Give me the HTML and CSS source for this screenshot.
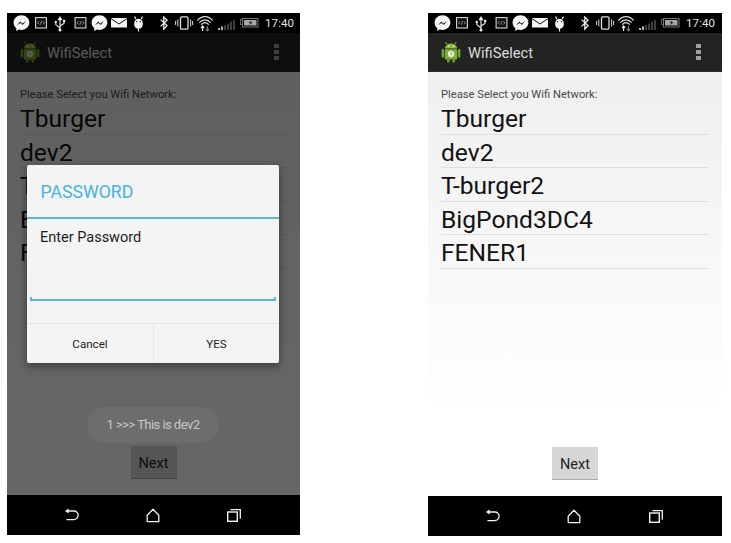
FILE: index.html
```html
<!DOCTYPE html>
<html lang="en">
<head>
<meta charset="utf-8">
<title>WifiSelect</title>
<link rel="stylesheet" href="styles.css">
</head>
<body>
<svg class="defs" width="0" height="0" aria-hidden="true">
  <defs>
    <g id="messenger">
      <path d="M0-7.8C-4.5-7.8-7.9-4.5-7.9-.4-7.9 1.9-6.9 3.9-5.2 5.3V7.9L-2.7 6.5C-1.8 6.8-.9 6.9 0 6.9 4.5 6.9 7.9 3.7 7.9-.4 7.9-4.5 4.5-7.8 0-7.8Z" fill="#f6f6f6"/>
      <path d="M-4.6 2.2-1.2-1.6.8.4 4.6-1.8 1.2 2-.8 0Z" fill="#1c1c1c"/>
    </g>
    <g id="codebox">
      <rect x=".6" y=".6" width="10.8" height="10.4" fill="#111" stroke="#d8d8d8" stroke-width="1.1"/>
      <path d="M4 4.2 2.6 5.8 4 7.4M8 4.2 9.4 5.8 8 7.4M6.6 4 5.4 7.6" fill="none" stroke="#c4c4c4" stroke-width=".7"/>
    </g>
    <symbol id="status" viewBox="0 0 258 20">
      <use href="#messenger" x="14.5" y="10"/>
      <use href="#codebox" x="28" y="4"/>
      <path d="M53 18V5M53 4 51.4 6.6H54.6ZM53 15 48.8 11.6V9.6M53 13 57 10.4V8.6" fill="none" stroke="#eee" stroke-width="1.1"/>
      <circle cx="48.8" cy="9" r="1.2" fill="#eee"/><rect x="56" y="6.8" width="2.2" height="2.2" fill="#eee"/>
      <circle cx="53" cy="17" r="1.5" fill="#eee"/>
      <use href="#codebox" x="67.5" y="4"/>
      <use href="#messenger" x="92.5" y="10"/>
      <rect x="104" y="5" width="16" height="9.5" rx=".5" fill="#f4f4f4"/>
      <path d="M104 5.6 112 11 120 5.6" fill="none" stroke="#111" stroke-width="1"/>
      <path d="M127.2 10A4.3 4.3 0 0 1 135.8 10V11.5A4.3 4.3 0 0 1 127.2 11.5Z" fill="#f4f4f4"/>
      <path d="M128.8 6 127.6 3.6M134.2 6 135.4 3.6M131.5 15V18.6" stroke="#f4f4f4" stroke-width="1.2"/>
      <circle cx="129.6" cy="8.6" r=".7" fill="#111"/><circle cx="133.4" cy="8.6" r=".7" fill="#111"/>
      <path d="M153.6 6.6 160 12.6 156.8 16V4L160 7.2 153.6 13.4" fill="none" stroke="#eee" stroke-width="1.3"/>
      <rect x="173.5" y="3.8" width="7.5" height="12.4" rx="1.2" fill="none" stroke="#ddd" stroke-width="1.3"/>
      <path d="M170.8 6.5V13.5M183.6 6.5V13.5M168.6 8V12M185.6 8V12" stroke="#ccc" stroke-width="1.1"/>
      <path d="M190.4 7.6C194.8 2.4 201.2 2.4 205.6 7.6M192.3 9.6C195.6 5.9 200.4 5.9 203.7 9.6M194.2 11.6C196.5 9.3 199.5 9.3 201.8 11.6" fill="none" stroke="#ddd" stroke-width="1.2"/>
      <path d="M195.6 18V13.6M194 15 195.6 13 197.2 15" fill="none" stroke="#f4f4f4" stroke-width="1.2"/>
      <path d="M200.4 13V17.4M198.8 15.8 200.4 17.8 202 15.8" fill="none" stroke="#777" stroke-width="1.2"/>
      <path d="M212 15V17M215 13.5V17M218 12V17M221 10.5V17M224 8.5V17M227 7V17" stroke-width="1.5" stroke="#555"/>
      <path d="M212 15V17M215 13.5V17" stroke-width="1.5" stroke="#ddd"/>
      <rect x="233.5" y="6.5" width="2" height="5" fill="none" stroke="#777" stroke-width=".8"/>
      <rect x="235.5" y="5.5" width="15.5" height="8.5" fill="none" stroke="#777" stroke-width="1"/>
      <rect x="237" y="7" width="12.5" height="5.5" fill="#a5a5a5"/>
      <path d="M244.6 7.4 241.4 10H243.4L242.2 12 245.6 9.4H243.6Z" fill="#111"/>
    </symbol>
    <symbol id="app" viewBox="0 0 20 22">
      <path d="M5.8 3.2 4.8 1M14.2 3.2 15.2 1" stroke="#86b33c" stroke-width="1"/>
      <path d="M4 7.6C4 4.6 6.6 2.4 10 2.4S16 4.6 16 7.6Z" fill="#8dbb3f"/>
      <rect x="3.8" y="8.2" width="12.4" height="10.4" rx="1.4" fill="#7fae36"/>
      <rect x=".6" y="8" width="2.5" height="8.4" rx="1.2" fill="#75a32f"/>
      <rect x="16.9" y="8" width="2.5" height="8.4" rx="1.2" fill="#75a32f"/>
      <rect x="6" y="17" width="2.6" height="4.6" rx="1.2" fill="#6d9a2c"/>
      <rect x="11.4" y="17" width="2.6" height="4.6" rx="1.2" fill="#6d9a2c"/>
      <circle cx="7.6" cy="5.2" r=".7" fill="#eee"/><circle cx="12.4" cy="5.2" r=".7" fill="#eee"/>
      <circle cx="10" cy="13" r="3.2" fill="#e4ecd2"/>
      <path d="M10 11.4V13L11.2 13.8" fill="none" stroke="#6d8f35" stroke-width=".8"/>
    </symbol>
    <symbol id="back" viewBox="0 0 15 14">
      <path d="M3.5 3H9.8A4.2 4.2 0 0 1 9.8 11.6H2.4" fill="none" stroke="#f2f2f2" stroke-width="1.3"/>
      <path d="M4.6 .4V5.6L.9 3Z" fill="#f2f2f2"/>
    </symbol>
    <symbol id="home" viewBox="0 0 14 15">
      <path d="M7 1.2 1.2 7.2V13.6H12.8V7.2Z" fill="none" stroke="#f2f2f2" stroke-width="1.3" stroke-linejoin="round"/>
    </symbol>
    <symbol id="recents" viewBox="0 0 14 13">
      <rect x=".7" y="3" width="9.6" height="9.3" fill="none" stroke="#f2f2f2" stroke-width="1.4"/>
      <path d="M3.4 .7H13.3V9.8" fill="none" stroke="#f2f2f2" stroke-width="1.3"/>
    </symbol>
  </defs>
</svg>

<main class="phones">
  <section class="phone phone-dimmed">
    <header class="statusbar">
      <svg class="status-icons"><use href="#status"/></svg>
      <span class="clock">17:40</span>
    </header>
    <div class="screen">
      <div class="actionbar">
        <svg class="app-icon"><use href="#app"/></svg>
        <span class="app-title">WifiSelect</span>
        <span class="overflow"><i></i><i></i><i></i></span>
      </div>
      <div class="content">
        <p class="prompt">Please Select you Wifi Network:</p>
        <ul class="networks">
          <li>Tburger</li>
          <li>dev2</li>
          <li>T-burger2</li>
          <li>BigPond3DC4</li>
          <li>FENER1</li>
        </ul>
        <button class="next" type="button">Next</button>
      </div>
      <div class="scrim"></div>
      <div class="toast">1 &gt;&gt;&gt; This is dev2</div>
      <div class="dialog">
        <h2 class="dialog-title">PASSWORD</h2>
        <div class="dialog-body">
          <p class="dialog-label">Enter Password</p>
          <div class="dialog-input"></div>
        </div>
        <div class="dialog-actions">
          <button type="button">Cancel</button>
          <button type="button">YES</button>
        </div>
      </div>
    </div>
    <nav class="navbar">
      <svg class="nav-back"><use href="#back"/></svg>
      <svg class="nav-home"><use href="#home"/></svg>
      <svg class="nav-recents"><use href="#recents"/></svg>
    </nav>
  </section>

  <section class="phone">
    <header class="statusbar">
      <svg class="status-icons"><use href="#status"/></svg>
      <span class="clock">17:40</span>
    </header>
    <div class="screen">
      <div class="actionbar">
        <svg class="app-icon"><use href="#app"/></svg>
        <span class="app-title">WifiSelect</span>
        <span class="overflow"><i></i><i></i><i></i></span>
      </div>
      <div class="content">
        <p class="prompt">Please Select you Wifi Network:</p>
        <ul class="networks">
          <li>Tburger</li>
          <li>dev2</li>
          <li>T-burger2</li>
          <li>BigPond3DC4</li>
          <li>FENER1</li>
        </ul>
        <button class="next" type="button">Next</button>
      </div>
    </div>
    <nav class="navbar">
      <svg class="nav-back"><use href="#back"/></svg>
      <svg class="nav-home"><use href="#home"/></svg>
      <svg class="nav-recents"><use href="#recents"/></svg>
    </nav>
  </section>
</main>
</body>
</html>
```

FILE: styles.css
```css
* { box-sizing: border-box; }

html, body { margin: 0; height: 100%; background: #fff; }

body { font-family: Roboto, "Liberation Sans", sans-serif; overflow: hidden; }

.defs { position: absolute; }

.phones {
  display: flex;
  gap: 128px;
  padding: 13px 0 0 7px;
}

.phone {
  width: 294px;
  height: 523px;
  display: flex;
  flex-direction: column;
}

.phone-dimmed { width: 293px; height: 522px; }

.statusbar {
  height: 20px;
  background: #000;
  display: flex;
  align-items: center;
  flex: none;
}

.status-icons { width: 258px; height: 20px; flex: none; }

.clock {
  color: #e2e2e2;
  font-size: 11.5px;
  letter-spacing: .1px;
}

.screen {
  flex: 1;
  position: relative;
  display: flex;
  flex-direction: column;
  min-height: 0;
}

.actionbar {
  height: 39px;
  flex: none;
  background: #232323;
  border-bottom: 1px solid #2e2e2e;
  display: flex;
  align-items: center;
  padding: 0 21px 0 13px;
}

.app-icon { width: 20px; height: 22px; flex: none; }

.app-title {
  color: #dcdcdc;
  font-size: 14.7px;
  line-height: 22px;
  margin: 1px 0 0 7px;
  flex: 1;
}

.overflow { display: flex; flex-direction: column; gap: 2px; }

.overflow i { display: block; width: 5px; height: 4px; background: #a0a0a0; }

.content {
  flex: 1;
  display: flex;
  flex-direction: column;
  padding: 16px 13px 16px;
  background: linear-gradient(#efefef, #f6f6f6 35%, #fff 80%);
}

.prompt {
  margin: 0;
  font-size: 11.2px;
  line-height: 13px;
  color: #4a4a4a;
}

.networks { list-style: none; margin: 0; padding: 0; flex: 1; }

.networks li {
  height: 33.5px;
  line-height: 36px;
  font-size: 24.6px;
  color: #111;
  border-bottom: 1px solid #dedede;
}

.next {
  align-self: center;
  width: 46px;
  height: 33px;
  margin: 0;
  padding: 3px 0 0;
  border: 0;
  border-bottom: 1px solid #aaa;
  background: #d6d6d6;
  color: #222;
  font: 14.5px Roboto, "Liberation Sans", sans-serif;
}

.scrim { position: absolute; inset: 0; background: rgba(0, 0, 0, .6); }

.toast {
  position: absolute;
  left: 80px;
  top: 374px;
  width: 132px;
  height: 36px;
  border-radius: 18px;
  background: #6d6d6d;
  color: #c8c8c8;
  font-size: 13px;
  letter-spacing: -.55px;
  line-height: 36px;
  text-align: center;
}

.dialog {
  position: absolute;
  left: 20px;
  top: 132px;
  width: 252px;
  height: 198px;
  background: #f4f4f4;
  border-radius: 2px;
  box-shadow: 0 3px 8px rgba(0, 0, 0, .45);
  display: flex;
  flex-direction: column;
}

.dialog-title {
  height: 54px;
  flex: none;
  margin: 0;
  padding: 0 13.5px;
  border-bottom: 2px solid #5cb6d6;
  color: #45b4de;
  font-size: 17.7px;
  font-weight: 400;
  line-height: 55px;
}

.dialog-body { flex: 1; padding: 9px 3px 0; }

.dialog-label {
  margin: 0;
  padding: 0 10px;
  font-size: 14.5px;
  line-height: 20px;
  color: #1c1c1c;
}

.dialog-input {
  height: 4px;
  margin-top: 49px;
  border: 2px solid #5fb1cc;
  border-top: 0;
}

.dialog-actions {
  height: 40px;
  flex: none;
  display: grid;
  grid-template-columns: 126px 1fr;
  border-top: 1px solid #e2e2e2;
}

.dialog-actions button {
  border: 0;
  background: none;
  padding: 0;
  color: #222;
  font: 11.6px Roboto, "Liberation Sans", sans-serif;
}

.dialog-actions button + button { border-left: 1px solid #e6e6e6; }

.navbar {
  height: 40px;
  flex: none;
  background: #000;
  display: grid;
  grid-template-columns: repeat(3, 1fr);
  padding: 0 25.5px 0 24px;
  align-items: center;
  justify-items: center;
}

.nav-back { width: 15px; height: 14px; }

.nav-home { width: 14px; height: 15px; }

.nav-recents { width: 14px; height: 13px; }
```
